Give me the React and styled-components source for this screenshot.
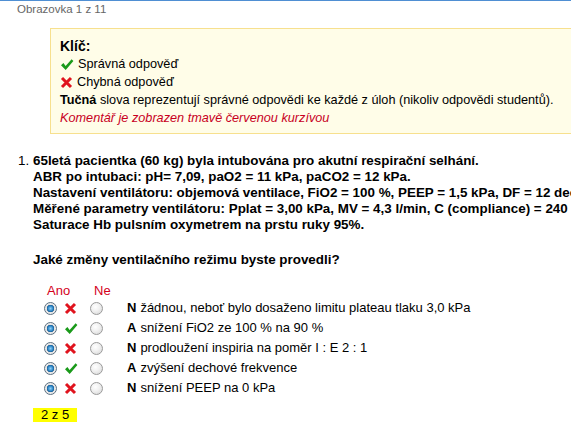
import React from "react";
import styled, { createGlobalStyle } from "styled-components";

const GlobalStyle = createGlobalStyle`
  html, body {
    margin: 0;
    padding: 0;
    background: #fff;
    overflow: hidden;
  }
  body {
    font-family: "Liberation Sans", Arial, sans-serif;
    color: #000;
  }
`;

const Page = styled.div`
  border-top: 1px solid #4f8fd3;
  width: 571px;
  height: 443px;
  overflow: hidden;
`;

const ScreenTitle = styled.div`
  padding: 1px 0 0 17px;
  font-size: 11.5px;
  line-height: 14px;
  color: #666;
`;

const KeyBox = styled.div`
  margin: 12px 0 0 50px;
  width: 600px;
  box-sizing: border-box;
  padding: 8px 9px 6px;
  background: #fffde8;
  border: 1px solid #f7e08e;
  font-size: 12.7px;
  line-height: 18px;
`;

const KeyTitle = styled.div`
  font-size: 14px;
  font-weight: 700;
  line-height: 18px;
`;

const KeyRow = styled.div`
  display: flex;
  align-items: center;
  gap: 4px;
`;

const Comment = styled.div`
  color: #c8001e;
  font-style: italic;
`;

const Question = styled.ol`
  margin: 19px 0 0;
  padding: 0 0 0 33px;
  font-size: 13.4px;
  line-height: 16px;
`;

const QuestionItem = styled.li`
  white-space: nowrap;
  &::marker {
    font-weight: 400;
  }
`;

const Stem = styled.div`
  font-weight: 700;
`;

const Ask = styled.div`
  font-weight: 700;
  margin-top: 19px;
`;

const Answers = styled.div`
  margin-top: 16px;
  display: grid;
  grid-template-columns: 47px 47px auto;
  font-size: 13px;
`;

const ColHead = styled.div`
  color: #d4001a;
  font-size: 13px;
  line-height: 14px;
  padding-left: ${(p) => p.$pad}px;
`;

const Cell = styled.div`
  display: flex;
  align-items: center;
  gap: 7px;
  height: 20px;
  padding-left: ${(p) => p.$pad || 0}px;
`;

const AnswerText = styled.div`
  display: flex;
  align-items: center;
  height: 20px;
  font-size: 13px;
  white-space: nowrap;
  b {
    font-weight: 700;
    margin-right: 4px;
  }
`;

const Radio = styled.span`
  display: inline-block;
  width: 11px;
  height: 11px;
  border-radius: 50%;
  border: 1px solid ${(p) => (p.$on ? "#5b6f80" : "#9a9a9a")};
  background: ${(p) =>
    p.$on
      ? "radial-gradient(circle at 50% 50%, #8fd0f5 0, #2d86c8 2.5px, #1a5f95 3.5px, #e4e4e4 4px, #fafafa 100%)"
      : "radial-gradient(circle at 40% 35%, #ffffff 0, #f2f2f2 40%, #d4d4d4 100%)"};
`;

const Score = styled.div`
  display: inline-block;
  margin-top: 10px;
  padding: 0 8px;
  background: #ffff00;
  font-size: 13px;
  line-height: 14px;
`;

const Check = () => (
  <svg width="14" height="13" viewBox="0 0 14 13">
    <path d="M1 7.2 L3.4 5.1 L5.6 8.1 L11.6 1.2 L13.4 2.9 L5.7 12 Z" fill="#1a9a1a" />
  </svg>
);

const Cross = () => (
  <svg width="13" height="13" viewBox="0 0 13 13">
    <path d="M2 2 L11 11 M11 2 L2 11" stroke="#e0141e" strokeWidth="3" strokeLinecap="butt" />
  </svg>
);

const answers = [
  { key: "N", text: "žádnou, neboť bylo dosaženo limitu plateau tlaku 3,0 kPa", ok: false },
  { key: "A", text: "snížení FiO2 ze 100 % na 90 %", ok: true },
  { key: "N", text: "prodloužení inspiria na poměr I : E 2 : 1", ok: false },
  { key: "A", text: "zvýšení dechové frekvence", ok: true },
  { key: "N", text: "snížení PEEP na 0 kPa", ok: false },
];

export default function App() {
  return (
    <Page>
      <GlobalStyle />
      <ScreenTitle>Obrazovka 1 z 11</ScreenTitle>
      <KeyBox>
        <KeyTitle>Klíč:</KeyTitle>
        <KeyRow>
          <Check /> Správná odpověď
        </KeyRow>
        <KeyRow>
          <Cross /> Chybná odpověď
        </KeyRow>
        <div>
          <b>Tučná</b> slova reprezentují správné odpovědi ke každé z úloh (nikoliv odpovědi studentů).
        </div>
        <Comment>Komentář je zobrazen tmavě červenou kurzívou</Comment>
      </KeyBox>
      <Question>
        <QuestionItem>
          <Stem>
            65letá pacientka (60 kg) byla intubována pro akutní respirační selhání.
            <br />
            ABR po intubaci: pH= 7,09, paO2 = 11 kPa, paCO2 = 12 kPa.
            <br />
            Nastavení ventilátoru: objemová ventilace, FiO2 = 100 %, PEEP = 1,5 kPa, DF = 12 dechů/min
            <br />
            Měřené parametry ventilátoru: Pplat = 3,00 kPa, MV = 4,3 l/min, C (compliance) = 240 ml/kPa
            <br />
            Saturace Hb pulsním oxymetrem na prstu ruky 95%.
          </Stem>
          <Ask>Jaké změny ventilačního režimu byste provedli?</Ask>
          <Answers>
            <ColHead $pad={14}>Ano</ColHead>
            <ColHead $pad={14}>Ne</ColHead>
            <div />
            {answers.map((a, i) => (
              <React.Fragment key={i}>
                <Cell $pad={11}>
                  <Radio $on />
                  {a.ok ? <Check /> : <Cross />}
                </Cell>
                <Cell $pad={10}>
                  <Radio />
                </Cell>
                <AnswerText>
                  <b>{a.key}</b>
                  {a.text}
                </AnswerText>
              </React.Fragment>
            ))}
          </Answers>
          <Score>2 z 5</Score>
        </QuestionItem>
      </Question>
    </Page>
  );
}
